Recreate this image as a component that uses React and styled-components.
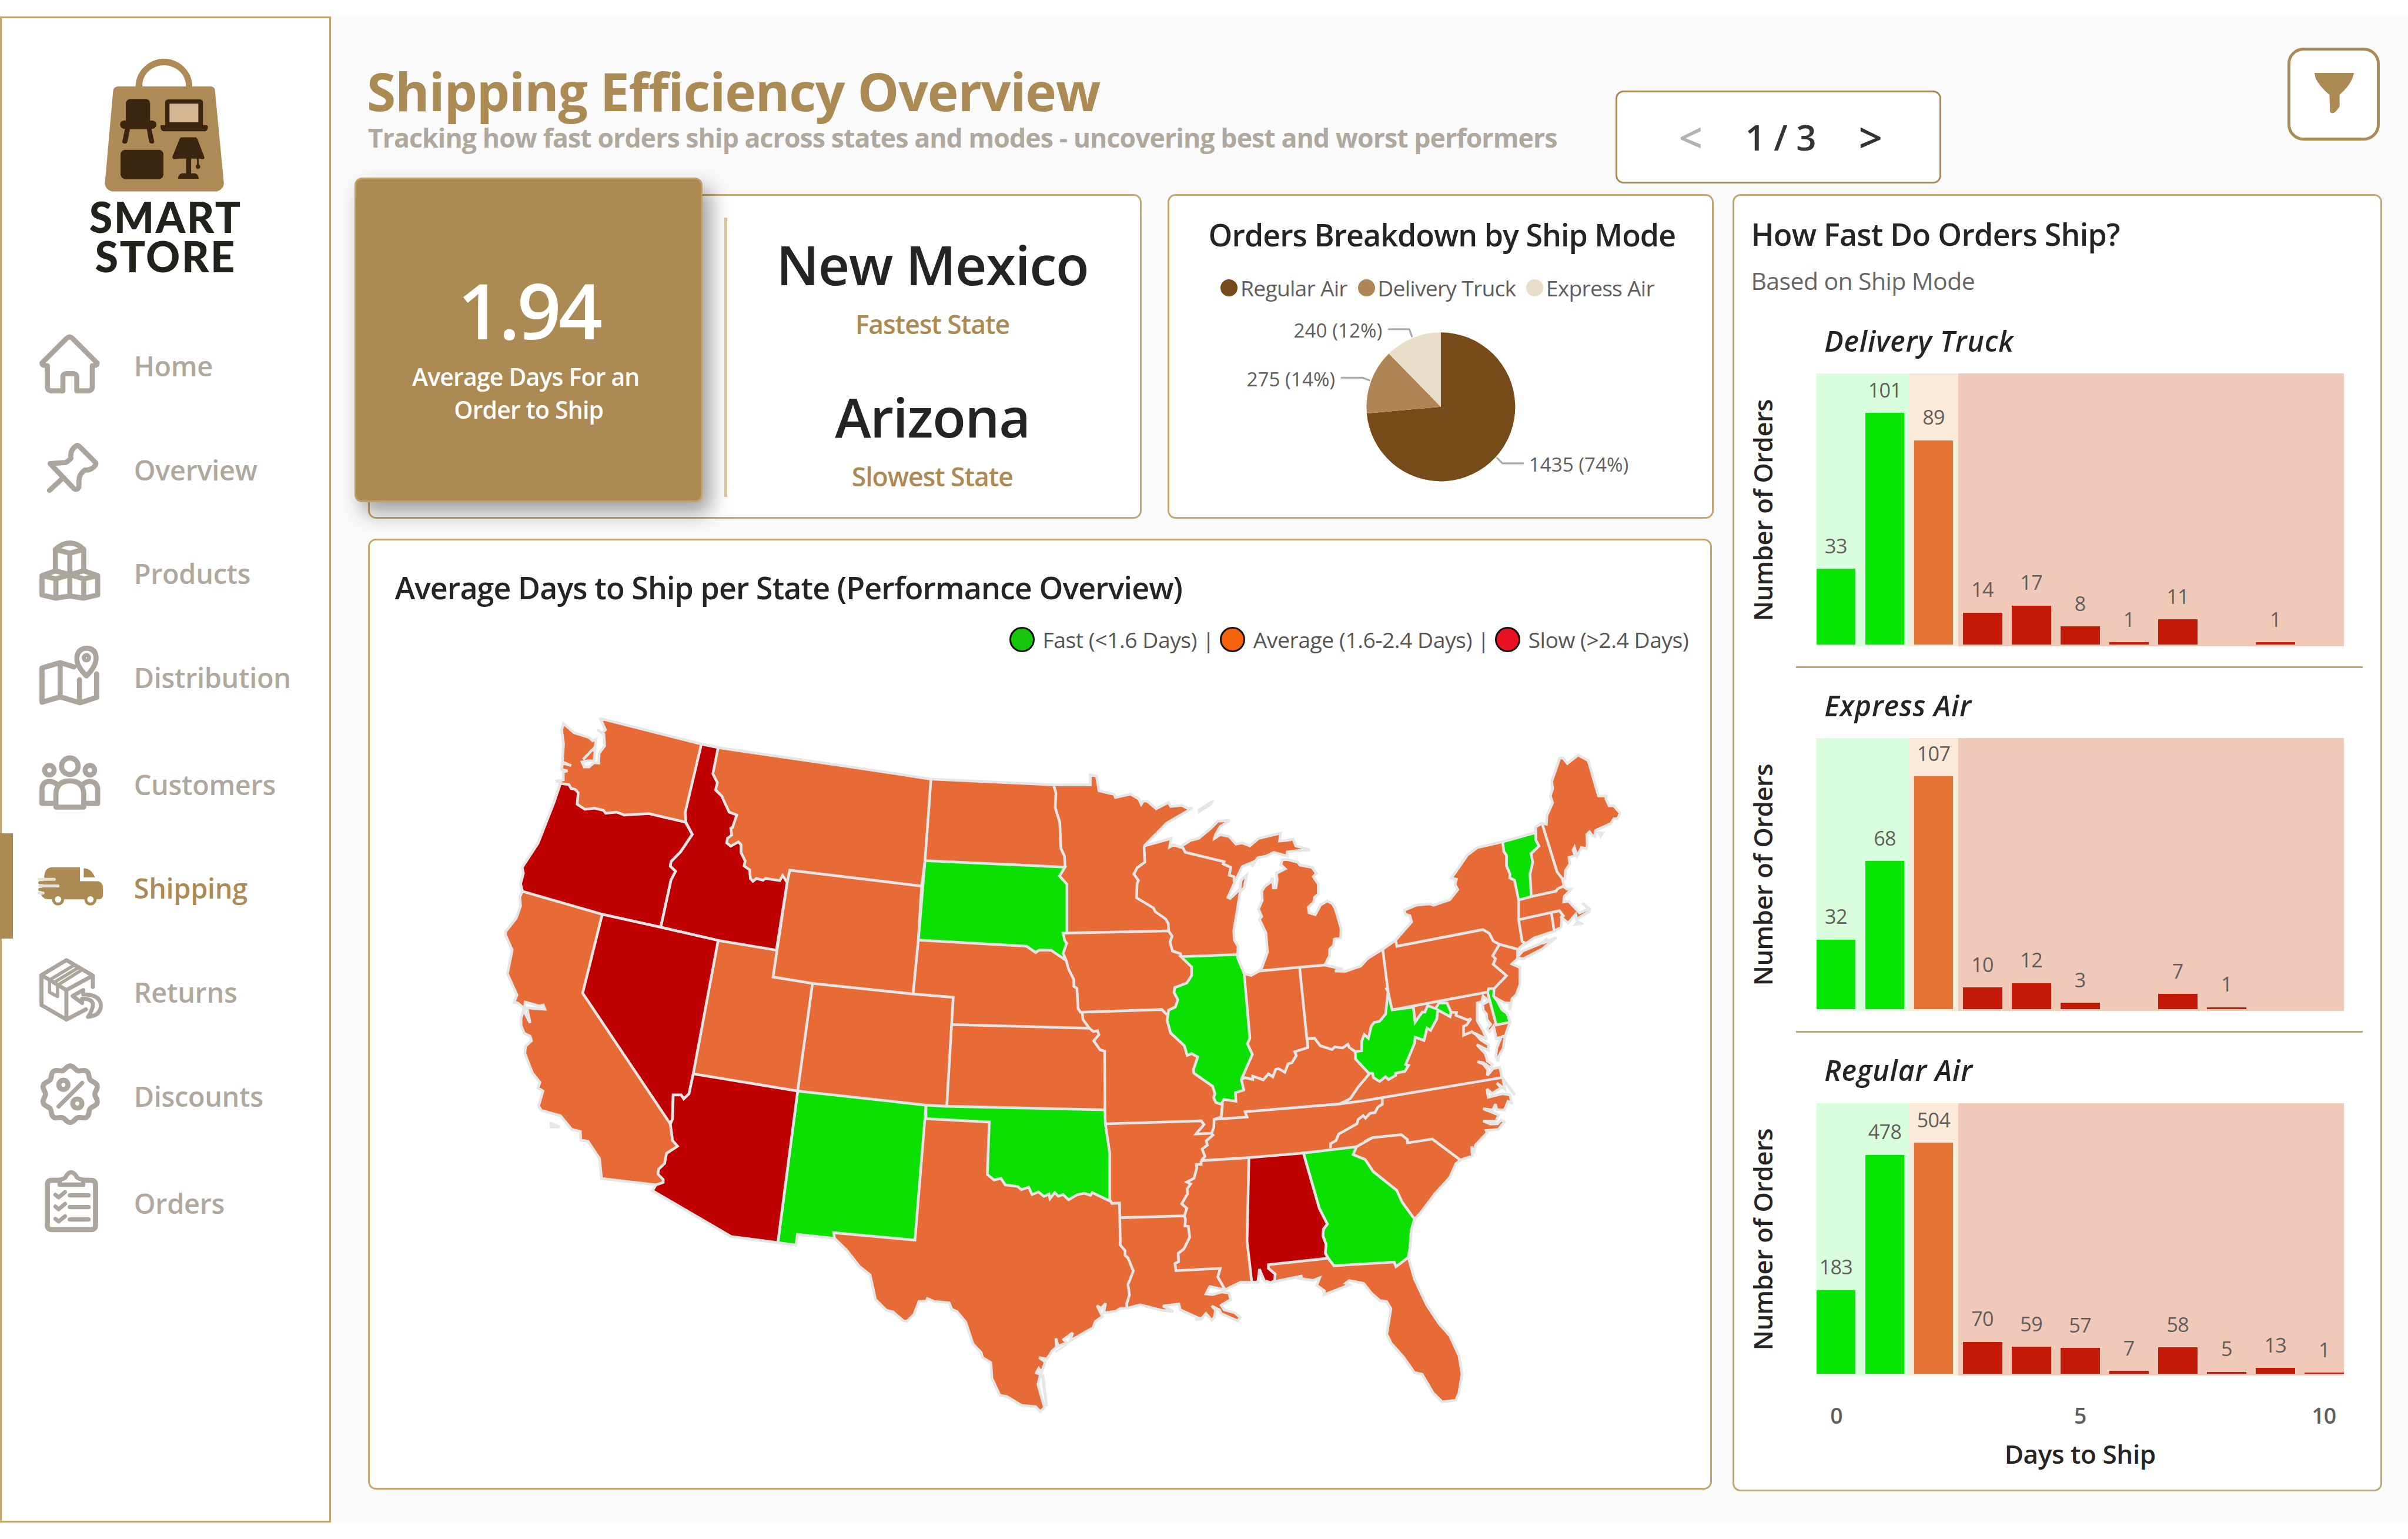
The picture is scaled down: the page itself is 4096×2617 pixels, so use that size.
import React from "react";
import styled, { createGlobalStyle, css } from "styled-components";

/* One rem is a hundred design units, the board is 4500 units wide. */
const u = (n) => `${(n / 100).toFixed(4)}rem`;

const color = {
  gold: "#ab8a54",
  line: "#c2a66e",
  muted: "#b0a89d",
  ink: "#252423",
  grey: "#605e5c",
  canvas: "#fafafa",
};

const GlobalStyle = createGlobalStyle`
  html { font-size: calc(100vw / 45); }
  body { margin: 0; background: #fff; overflow: hidden; }
  *, *::before, *::after { box-sizing: border-box; }
  #root { font-family: "Open Sans", "Noto Sans", sans-serif; color: ${color.ink}; }
`;

const type = (size, line, weight = 400, track = 0) => css`
  font-size: ${u(size)};
  line-height: ${u(line)};
  font-weight: ${weight};
  letter-spacing: ${track}em;
  white-space: nowrap;
`;

/* ---------- shell ---------- */

const Page = styled.div`
  width: 45rem;
  height: 28.75rem;
  padding: ${u(31)} 0;
  display: flex;
`;

const Sidebar = styled.aside`
  width: ${u(619)};
  flex: none;
  background: #fff;
  border: ${u(3.6)} solid ${color.line};
  display: flex;
  flex-direction: column;
`;

const Main = styled.main`
  flex: 1;
  background: ${color.canvas};
  padding: 0 ${u(48)} 0 ${u(68.6)};
  display: flex;
  flex-direction: column;
`;

/* ---------- sidebar ---------- */

const Logo = styled.div`
  padding-top: ${u(74.5)};
  display: flex;
  flex-direction: column;
  align-items: center;
`;

const Bag = styled.svg`
  width: ${u(224.5)};
  height: ${u(250)};
  margin-right: ${u(3)};
  display: block;
`;

const Brand = styled.div`
  ${type(79, 73.5, 900, 0.035)}
  font-family: Lato, "Open Sans", sans-serif;
  color: #22211c;
  text-align: center;
  margin-top: ${u(9)};
`;

const Nav = styled.nav`
  margin-top: ${u(72)};
  display: flex;
  flex-direction: column;
  gap: ${u(6)};
`;

const NavGroup = styled.div`
  display: flex;
  flex-direction: column;
`;

const NavItem = styled.a`
  position: relative;
  height: ${u(194)};
  padding-left: ${u(69.4)};
  display: flex;
  align-items: center;
  gap: ${u(57.5)};
  color: ${(p) => (p.$active ? color.gold : color.muted)};
  ${type(51.5, 60, 600, -0.007)}
`;

const ActiveMark = styled.span`
  position: absolute;
  left: ${u(-3.6)};
  top: ${u(-6)};
  width: ${u(24)};
  height: ${u(197)};
  background: ${color.gold};
`;

const NavIcon = styled.svg`
  width: ${u(120)};
  height: ${u(120)};
  margin-bottom: ${u(8)};
  overflow: visible;
  fill: none;
  stroke: ${(p) => (p.$active ? color.gold : "#aca59d")};
  stroke-width: 9.5;
  stroke-linejoin: round;
  stroke-linecap: round;
`;

function scallop() {
  const points = [];
  for (let i = 0; i < 120; i += 1) {
    const a = (i / 120) * Math.PI * 2;
    const r = 49.5 + 3.4 * Math.cos(10 * (a - Math.PI / 2));
    points.push(`${(58.6 + r * Math.cos(a)).toFixed(1)},${(60 + r * Math.sin(a)).toFixed(1)}`);
  }
  return points.join(" ");
}

const icons = {
  home: (
    <g transform="translate(2 5.5)">
      <path d="M14 60V97Q14 105 22 105H43V80Q43 73 50 73H62Q69 73 69 80V105H90Q98 105 98 97V60" />
      <path d="M14 58Q4 58 4 53L50 7Q55.5 2 61 7L107 53Q107 58 98 58" />
    </g>
  ),
  pin: (
    <g>
      <path d="M21 52L50 50Q55 48 60 42Q58 26 70 19Q72 17 76 20L106 50Q108 54 102 59Q94 65 86 64Q75 72 75 84L75 96Q70 104 64 97Z" />
      <path d="M46 78L20 102" />
    </g>
  ),
  boxes: (
    <g>
      <path d="M31 58V19Q44 7 58 7Q72 7 84 19V58M31 19L58 26L84 19M58 26V64" />
      <path d="M6 68L31 59L58 66L84 59L110 68V104L84 110L58 106L31 110L6 104ZM6 68L32 74L58 66L84 74L110 68M32 74V109M58 66V106M84 74V109" />
    </g>
  ),
  map: (
    <g>
      <path d="M66 44L40 36L6 46V110L40 100L77 111L108 101V57M40 36V100M76 68V110" />
      <path d="M89 61Q71 43 71 28Q72 10 89 9Q107 10 107 28Q107 43 89 61Z" />
      <circle cx="89" cy="27" r="5" strokeWidth="7.5" />
    </g>
  ),
  people: (
    <g>
      <circle cx="58" cy="29.6" r="15.5" />
      <circle cx="19.8" cy="37" r="8.8" />
      <circle cx="95.5" cy="37" r="8.8" />
      <path d="M32 106V80Q34 57 58 57Q82 57 84 80V106Z" />
      <path d="M31 99H6V70Q8 58 20 58Q26 58 32 62M84 99H110V70Q107 58 95 58Q90 58 84 62" />
    </g>
  ),
  truck: (
    <g stroke="none" fill={color.gold}>
      <path d="M10 46Q10 26 24 25H77V51H111Q120 53 120 64V76Q120 85 111 85H18Q6 84 4 74Z" />
      <path d="M84 27Q98 27 105 44H84Z" />
      <path d="M0 47.500H29M2 60H36M0 73H8" stroke="#e9e2d8" strokeWidth="5.500" />
      <path d="M2 53.700H32M2 66.500H22" stroke={color.gold} strokeWidth="6" />
      <circle cx="36" cy="85" r="11.500" />
      <circle cx="96.500" cy="85" r="11.500" />
      <circle cx="36" cy="85" r="6" fill="#fff" />
      <circle cx="96.500" cy="85" r="6" fill="#fff" />
    </g>
  ),
  returns: (
    <g strokeWidth="7.5">
      <path d="M101 54V33L51.600 4L5 32V88L51.600 115L88 96M5 32L51.600 60L101 33M51.600 60V115" />
      <path d="M66.700 13L20 41V64L35 72V51L81 22M28 46L74 18" strokeWidth="6" />
      <path d="M83 60L63 71L81 84V76Q103 76 101 90Q99 100 92 110Q116 108 116 88Q114 68 83 68Z" />
    </g>
  ),
  discount: (
    <g>
      <polygon points={scallop()} />
      <circle cx="46" cy="42.500" r="8.500" />
      <circle cx="72" cy="77.500" r="8.500" />
      <path d="M81 39L37 83" strokeWidth="8" />
    </g>
  ),
  orders: (
    <g>
      <path d="M38 21H24Q16 21 16 29V105Q16 113 24 113H98Q106 113 106 105V29Q106 21 98 21H84" />
      <path d="M39 29V20Q50 18 51 13Q60.500 -1 70 13Q71 18 83 20V29Z" strokeWidth="8" />
      <path d="M58 49H93M58 71H93M58 94H93" strokeWidth="8" />
      <path d="M31 48L37 53L49 43M31 70L37 75L49 65M31 93L37 98L49 88" strokeWidth="7.5" />
    </g>
  ),
};

const navGroups = [
  [
    { label: "Home", icon: "home" },
    { label: "Overview", icon: "pin" },
    { label: "Products", icon: "boxes" },
    { label: "Distribution", icon: "map" },
  ],
  [
    { label: "Customers", icon: "people" },
    { label: "Shipping", icon: "truck", active: true },
    { label: "Returns", icon: "returns" },
    { label: "Discounts", icon: "discount" },
  ],
  [{ label: "Orders", icon: "orders" }],
];

function BagMark() {
  return (
    <Bag viewBox="480 300 550 700" preserveAspectRatio="none">
      <g fill="#ae8a56">
        <path d="M622 448V436C628 358 690 302 752 302S876 358 881 436V448H852V436C848 378 802 337 752 337S656 378 653 436V448Z" />
        <path d="M541 448H966Q984 451 985 468L1026 955Q1024 985 995 997H514Q484 986 481 958L519 468Q522 450 541 448Z" />
      </g>
      <g fill="#3a2511">
        <path d="M596 513H670Q687 517 688 536V626H700Q717 630 717 647Q717 664 702 669H694L707 736Q706 747 696 747Q687 747 684 738L673 671H596L584 738Q580 747 571 747Q561 746 561 736L573 669H566Q551 664 551 647Q551 630 566 626H577V536Q578 518 596 513Z" />
        <path d="M770 515H918Q929 518 930 528V651H948Q953 654 953 660Q951 680 940 682H750Q736 680 735 655L739 651H757V528Q758 518 770 515Z" />
        <path d="M830 714H898L904 721L937 818Q937 828 928 828L915 825H911V854Q920 862 917 872Q912 880 907 880Q898 878 897 866Q898 858 903 854V825H876V902H893Q909 906 911 931H816Q816 908 834 902H853V825H821L797 828Q789 824 790 816L824 720Z" />
        <path d="M572 779H731Q748 784 749 802V910Q747 928 731 932H572Q556 928 553 910V802Q554 784 572 779Z" />
      </g>
      <path fill="#d4b693" d="M777 538H909V635H777Z" />
    </Bag>
  );
}

/* ---------- header ---------- */

const Header = styled.header`
  height: ${u(331.5)};
  flex: none;
  padding-right: ${u(5)};
  display: flex;
  align-items: flex-start;
`;

const Titles = styled.div`
  flex: 1;
  padding-top: ${u(80)};
`;

const PageTitle = styled.h1`
  ${type(98, 118, 700, -0.013)}
  margin: 0 0 0 ${u(-2)};
  color: ${color.gold};
`;

const PageSubtitle = styled.p`
  ${type(49, 58, 700, -0.0208)}
  margin: 0;
  color: ${color.muted};
`;

const Pager = styled.div`
  width: ${u(609)};
  height: ${u(174)};
  margin: ${u(138)} ${u(647)} 0 0;
  padding-left: ${u(8)};
  border: ${u(4)} solid ${color.gold};
  border-radius: ${u(15)};
  background: #fff;
  display: grid;
  grid-template-columns: repeat(3, ${u(168)});
  justify-content: center;
  align-items: center;
  justify-items: center;
`;

const PageCount = styled.span`
  ${type(66, 80, 600, -0.01)}
  color: #333;
`;

const PageArrow = styled.span`
  ${type(78, 80, 600)}
  color: ${(p) => (p.$disabled ? "#b3b3b3" : "#333")};
`;

const FilterButton = styled.button`
  width: ${u(172)};
  height: ${u(174)};
  margin: ${u(58)} 0 0;
  padding: 0 0 ${u(1)} ${u(2)};
  border: ${u(6.2)} solid ${color.gold};
  border-radius: ${u(30)};
  background: #fff;
  display: flex;
  align-items: center;
  justify-content: center;
`;

const Funnel = styled.svg`
  width: ${u(76)};
  height: ${u(80)};
  fill: ${color.gold};
`;

/* ---------- cards ---------- */

const Body = styled.div`
  display: flex;
  gap: ${u(35)};
`;

const LeftColumn = styled.div`
  width: ${u(2515.4)};
  flex: none;
  display: flex;
  flex-direction: column;
  gap: ${u(38)};
`;

const TopRow = styled.div`
  display: flex;
  gap: ${u(47.7)};
`;

const Card = styled.section`
  background: #fff;
  border: ${u(3.6)} solid ${color.line};
  border-radius: ${u(15)};
`;

const StatesCard = styled(Card)`
  width: ${u(1446.4)};
  height: ${u(606)};
  display: flex;
`;

const AverageTile = styled.div`
  width: ${u(650)};
  height: ${u(606)};
  flex: none;
  margin: ${u(-34)} 0 0 ${u(-28)};
  padding-top: ${u(168)};
  background: ${color.gold};
  border: ${u(4)} solid #c2a067;
  border-radius: ${u(14)};
  box-shadow: ${u(15)} ${u(19)} ${u(38)} rgba(0, 0, 0, 0.38);
  color: #fff;
  text-align: center;
`;

const AverageValue = styled.div`
  ${type(144, 150, 600, -0.036)}
`;

const AverageCaption = styled.div`
  ${type(45, 61.5, 600, -0.02)}
  margin-top: ${u(19)};
`;

const Rule = styled.div`
  width: ${u(5.5)};
  height: ${u(522)};
  flex: none;
  margin: ${u(41)} 0 0 ${u(40.5)};
  background: #d5c4a0;
`;

const StateList = styled.div`
  flex: 1;
  padding: ${u(68)} ${u(5)} 0 0;
  display: flex;
  flex-direction: column;
  gap: ${u(83)};
  text-align: center;
`;

const StateName = styled.div`
  ${type(102, 120, 600, -0.015)}
`;

const StateRole = styled.div`
  ${type(49, 60, 600, -0.025)}
  margin-top: ${u(22)};
  color: ${color.gold};
`;

const CardTitle = styled.h2`
  ${type(57, 70, 600, -0.017)}
  margin: 0;
`;

/* ---------- pie ---------- */

const PieCard = styled(Card)`
  width: ${u(1021.3)};
  height: ${u(606)};
  padding-top: ${u(38.5)};
  display: flex;
  flex-direction: column;
  align-items: center;
`;

const PieTitle = styled(CardTitle)`
  letter-spacing: -0.0185em;
  padding-left: ${u(5)};
`;

const PieLegend = styled.div`
  margin: ${u(39)} 0 0 ${u(-12)};
  display: flex;
  gap: ${u(19.5)};
`;

const PieKey = styled.span`
  ${type(41, 50, 400, -0.021)}
  color: ${color.grey};
  display: flex;
  align-items: center;
  gap: ${u(5)};
`;

const PieDot = styled.i`
  width: ${u(32)};
  height: ${u(32)};
  border-radius: 50%;
  background: ${(p) => p.$fill};
`;

const PieChart = styled.svg`
  width: ${u(1014)};
  height: ${u(401.5)};
  display: block;
  font-size: 36.5px;
  text { fill: ${color.grey}; }
  polyline { fill: none; stroke: #a9a9a9; stroke-width: 3.4; stroke-linecap: round; stroke-linejoin: round; }
`;

const modes = [
  { name: "Regular Air", value: 1435, fill: "#764a19", text: "1435 (74%)", x: 2857, y: 879, anchor: "start", lead: "2797.7,854 2807.5,864 2846,864" },
  { name: "Delivery Truck", value: 275, fill: "#b08555", text: "275 (14%)", x: 2495, y: 720, anchor: "end", lead: "2507,704 2546,704 2559,709" },
  { name: "Express Air", value: 240, fill: "#e9ddc8", text: "240 (12%)", x: 2583, y: 628.7, anchor: "end", lead: "2595,613.4 2633.5,613.4 2638.4,627" },
];

function ShipModePie() {
  const total = modes.reduce((s, m) => s + m.value, 0);
  const cx = 2692.4;
  const cy = 758.5;
  const r = 139;
  let angle = -Math.PI / 2;
  return (
    <PieChart viewBox="2185 562 1014 401.5">
      {modes.map((m) => {
        const next = angle + (m.value / total) * Math.PI * 2;
        const large = next - angle > Math.PI ? 1 : 0;
        const d = `M${cx} ${cy}L${cx + r * Math.cos(angle)} ${cy + r * Math.sin(angle)}A${r} ${r} 0 ${large} 1 ${cx + r * Math.cos(next)} ${cy + r * Math.sin(next)}Z`;
        angle = next;
        return <path key={m.name} d={d} fill={m.fill} />;
      })}
      {modes.map((m) => (
        <g key={m.name}>
          <polyline points={m.lead} />
          <text x={m.x} y={m.y} textAnchor={m.anchor}>{m.text}</text>
        </g>
      ))}
    </PieChart>
  );
}

/* ---------- map ---------- */

const MapCard = styled(Card)`
  width: ${u(2511.4)};
  height: ${u(1776)};
  padding-top: ${u(54)};
`;

const MapTitle = styled(CardTitle)`
  padding-left: ${u(47)};
`;

const MapLegend = styled.div`
  margin-top: ${u(36)};
  padding-right: ${u(40)};
  display: flex;
  justify-content: flex-end;
  gap: ${u(11)};
`;

const MapKey = styled.span`
  ${type(41, 50, 400, -0.013)}
  color: #555;
  display: flex;
  align-items: center;
  gap: ${u(15)};
`;

const MapDot = styled.i`
  width: ${u(47)};
  height: ${u(47)};
  border-radius: 50%;
  border: ${u(3.5)} solid #111;
  background: ${(p) => p.$fill};
`;

const MapCanvas = styled.svg`
  width: ${u(2504)};
  height: ${u(1552)};
  display: block;
  fill: #e66b37;
  stroke: #e6e6e6;
  stroke-width: 5;
  stroke-miterlimit: 3;
`;

/* The outlines are kept on separate sheets, each with its own origin and step. */
const sheets = {
  west: [900, 1280, 0.44643, 0.66964],
  plains: [1500, 1400, 0.44643, 0.42092],
  mid: [2050, 1400, 0.35714, 0.70153],
  east: [2550, 1380, 0.33163, 0.5102],
  south: [1500, 2000, 0.44643, 0.42092],
  base: [0, 0, 2.8699, 2.8699],
};

function trace(source) {
  return source
    .split("|")
    .flatMap((part) => {
      const [name, ...pairs] = part.trim().split(/\s+/);
      const [ox, oy, sx, sy] = sheets[name];
      return pairs.map((pair) => {
        const [x, y] = pair.split(",").map(Number);
        return `${(ox + x * sx).toFixed(1)},${(oy + y * sy).toFixed(1)}`;
      });
    })
    .join(" ");
}

const country = `west 505,92 920,162 990,172 1568,228
 | plains 535,128 1050,154 1204,154 1204,110 1230,115 1240,180 1304,196 1309,210 1372,195 1407,216 1417,240 1425,226 1442,226 1480,260 1531,232 1541,250
 | mid 443,147 475,155 500,154 365,194 246,255 388,235 380,258 400,252 435,258 490,240 532,235 598,207 632,189 695,187 645,203 620,225 615,235 645,225 692,230 727,250 760,247 800,255 845,235 960,221 955,242 995,240 1027,237 1040,255 1115,266 1040,268 995,271 995,282 925,272 885,282 840,287 810,310 815,298 760,310 722,350 685,392 697,395 748,370 755,345 783,333 770,367 750,375 716,480 718,505 738,522 735,552 770,595 806,600 848,588 862,580 892,538 884,487 850,450 862,443 845,423 865,400 862,375 880,362 906,352 918,340 922,367 936,367 943,345 938,328 985,316 962,305 970,292 995,291 1050,298 1062,306 1125,312 1148,328 1132,337 1158,357 1158,383 1138,392 1134,405 1106,418 1110,433 1142,438 1170,412 1205,402 1230,408 1245,420 1277,475 1275,500 1242,503 1238,520 1218,530 1217,547 1192,572 1285,583 1245,588 1300,589 1380,575 1415,555 1495,530
 | east 175,735 265,668 255,645 230,640 225,625 290,607 367,602 388,607 480,587 525,550 510,530 518,512 490,507 580,423 635,396 775,375 965,341 965,320 1000,307 1025,310 1028,278 1060,232 1047,207 1060,180 1055,153 1100,68 1118,68 1143,88 1203,57 1260,77 1318,207 1360,207 1360,217 1378,243 1405,243 1440,270 1425,290 1405,290 1388,308 1302,333 1298,355 1282,350 1268,338 1252,348 1255,385 1250,400 1222,395 1198,427 1183,395 1175,405 1185,425 1152,432 1157,455 1132,480 1130,510 1115,510 1125,540 1140,548 1165,548 1125,575 1122,595 1150,593 1212,635 1265,620 1228,600 1268,620 1266,630 1195,658 1190,640 1147,672 1103,648 1112,650 1108,687 1065,703 955,727 875,762 868,792 890,775 1000,745 1030,728 1020,742 1080,725 1000,768 895,803 868,800 830,822 875,835 875,898 855,935 830,950 820,990 815,965 785,963 730,943 745,955 775,990 803,1003 820,1035 790,1090 782,1130 755,1162 752,1178 740,1160 745,1130 765,1098 742,1095 727,1050 705,1070 690,1060 710,1043 690,1025 687,1005 670,992 665,970 700,958 668,940 660,960 635,965 635,1030 665,1063 690,1098 650,1085 620,1075 655,1100 698,1118 698,1138 632,1117 680,1150 693,1178 720,1190 710,1202 668,1183 636,1180 668,1188 695,1210 692,1230 725,1205 762,1200 775,1237 848,1302 780,1245 790,1280 745,1258 770,1275 718,1297 690,1280 697,1310 778,1297 820,1302 828,1330 808,1325 788,1357 745,1355 738,1335 722,1357 668,1352 755,1375 740,1398 668,1397 710,1408 750,1407 770,1393 788,1400 755,1427 685,1432 690,1440 625,1485 615,1515 603,1490 607,1525 540,1540
 | base 948,757 944,766 934,777 925,789 921,793 919,800 918,812 917,818 921,832 929,849 937,861 944,869 950,882 952,894 950,906 948,911 939,912 933,906 926,894 921,893 914,883 906,874 903,868
 | mid 1538,1487 1515,1468 1480,1466 1435,1445 1395,1420 1320,1412 1300,1420 1320,1424 1188,1450 1190,1440 1150,1425 1165,1405 1130,1412 1040,1405 1075,1400 930,1415 910,1418 875,1412 850,1382 842,1416 810,1417 750,1417 670,1437 590,1428 570,1448 605,1450 650,1443 690,1445 700,1463 650,1478 665,1490 720,1498 748,1510 738,1520 705,1513 650,1500 640,1490 600,1480 620,1490 615,1510 600,1518 570,1500 545,1515 515,1517 530,1512 435,1490 428,1475 345,1480 400,1495 345,1492 225,1477 160,1486
 | south 1330,1052 1310,1065 1260,1072 1268,1030 1250,1052 1232,1040 1255,1088 1225,1110 1215,1138 1120,1195 1130,1160 1092,1190 1105,1205 1070,1220 1060,1185 1062,1225 1045,1240 1022,1277 990,1270 1015,1290 1000,1335 988,1318 978,1338 995,1345 985,1390 1012,1492 995,1510 975,1488 917,1483 855,1444 825,1437 792,1362 788,1293 753,1270 747,1248 713,1210 682,1112 645,1065 625,1057 613,1027 550,1021 522,1008 517,1020 487,1021 465,1080 435,1110 422,1107 378,1068 350,1060 305,1013 282,903 237,865 185,795 133,741
 | west 1322,1530 1315,1560 1240,1553 1045,1536 715,1408 730,1392 502,1374 494,1319 445,1270 415,1267 413,1243 377,1237 330,1199 250,1184 238,1172 257,1130 236,1122 244,1106 213,1080 181,1025 184,1005 209,990 203,977 178,969 165,947 165,927 175,905 203,940 190,898 265,902 258,890 242,893 182,882 180,900 150,884 136,883 148,862 108,803 128,737 100,695 101,685 145,648 163,614 160,588 171,573 163,552 175,523 170,506 236,439 303,325 330,268 310,266 342,262 342,240 360,237 335,233 338,215 375,222 338,212 343,162 335,122 343,105 388,131 450,144 465,153 480,148 475,170 425,205 460,180 475,178 470,210 450,208 420,212 430,226 450,226 470,214 490,215 492,188 515,167 512,135 485,122 505,132 518,122 498,92`;

const slow = [
  "west 330,272 365,275 375,286 392,289 404,298 400,330 432,344 473,341 510,347 519,355 565,352 597,360 700,356 853,380 882,414 833,463 793,490 790,503 812,517 793,541 750,673 505,637 171,573 163,552 175,523 170,506 236,439 303,325",
  "west 920,162 990,172 968,245 987,270 979,290 1005,307 1036,352 1068,360 1050,395 1043,397 1047,416 1029,425 1026,438 1043,447 1075,435 1086,443 1086,465 1103,488 1099,502 1122,513 1125,537 1136,545 1150,537 1178,542 1188,537 1248,543 1260,529 1279,548 1234,737 990,710 750,673 793,541 812,517 790,503 793,490 833,463 882,414 855,380 852,353",
  "west 505,637 750,673 990,710 886,1082 868,1138 846,1152 835,1141 802,1141 799,1208 790,1222 423,857",
  "west 886,1082 1323,1130 1240,1553 1045,1536 715,1408 730,1392 760,1385 760,1377 738,1362 741,1348 766,1332 774,1304 820,1284 799,1268 790,1222 799,1208 802,1141 835,1141 846,1152 868,1138",
  "mid 795,1085 1080,1073 1163,1220 1205,1262 1185,1275 1182,1293 1198,1315 1195,1340 1210,1353 897,1370 897,1380 932,1395 930,1412 910,1418 875,1412 850,1382 842,1416 810,1417 785,1308",
];

const fast = [
  "west 1323,1130 | south 516,150 470,749 130,716 133,741 | west 1322,1530 1315,1560 1240,1553",
  "south 516,150 600,155 1265,171 1267,233 1285,362 1285,575 1212,538 1205,550 1178,541 1148,548 1113,570 1090,547 1070,554 1055,538 1035,565 1031,545 1010,555 987,535 960,547 946,514 915,525 900,511 848,504 830,475 801,482 773,458 781,225 516,210",
  "plains 512,490 1098,519 1075,558 1106,595 1106,812 1090,812 1097,845 1105,857 1090,902 1103,933 1040,888 990,887 975,898 937,870 484,843",
  "mid 440,550 735,544 735,552 770,595 800,767 787,782 813,810 755,877 768,905 724,912 727,935 663,930 650,943 622,938 610,925 617,915 605,895 507,860 505,850 527,817 495,808 472,813 457,787 385,753 367,720 375,692 410,684 423,665 403,645 407,632 470,620 495,600 495,577",
  "mid 1080,1073 1358,1056 1340,1077 1403,1090 1445,1122 1568,1172 | base 913,782 921,793 919,800 918,812 917,818 909,824 | mid 1555,1363 1240,1373 1210,1353 1195,1340 1198,1315 1182,1293 1185,1275 1205,1262 1163,1220",
  "east 133,925 155,990 275,980 285,1035 325,998 340,998 355,975 400,985 420,965 465,965 487,998 482,1015 412,990 408,1022 372,1065 352,1057 335,1102 285,1090 282,1112 232,1190 248,1193 228,1215 175,1222 175,1230 135,1245 118,1235 85,1252 50,1238 45,1222 20,1222 | mid 1425,862 1352,822 1352,803 1385,800 1385,775 1398,757 1420,767 1435,735 1450,725 1478,722 1510,703 1520,655",
  "east 693,925 700,912 730,912 727,940 745,955 775,990 803,1003 820,1035 742,1045",
  "east 778,375 965,341 965,368 983,390 938,418 948,450 932,493 940,575 868,588 845,515 818,507 820,493 800,463 800,425 785,410",
];

const borders = [
  "west 1279,548 1290,514 | plains 498,603",
  "plains 537,128 512,490 498,603 484,843 462,1082",
  "west 1279,548 1220,812 1385,830 | plains 462,1082 630,1097 | south 603,155",
  "west 1385,830 1323,1130",
  "plains 624,1218 1200,1234",
  "plains 1103,933 1113,972 1135,1018 1135,1048 1148,1057 1153,1147 1163,1163 1170,1163 1173,1195 1200,1234 1217,1249 1234,1245 1240,1263 1218,1290 1245,1330 1264,1336 | south 1265,171",
  "plains 1163,1163 1503,1151 | mid 367,705",
  "plains 1090,812 1531,802",
  "plains 1050,154 1060,190 1057,255 1076,320 1081,437 1096,470 1098,519",
  "mid 246,255 250,298 210,313 193,330 217,347 210,355 207,393 295,420 305,430 360,450 373,462 375,482 393,495 382,510 395,535 437,542 440,550",
  "mid 435,258 450,260 462,272 665,297 660,303 700,312 692,333 717,337 717,352",
  "mid 848,588 1060,578 1192,572",
  "mid 1060,578 1103,792",
  "mid 755,877 775,872 815,877 815,868 870,878 897,862 920,870 935,850 950,848 983,858 1000,835 1020,832 1043,813 1035,803 1103,792 1100,768 1138,767 1168,787 1230,797 1245,790 1285,793 1313,783 1320,792 1352,803",
  "mid 1495,530 | east 133,925",
  "east 133,925 120,908",
  "east 175,735 182,757 667,696 703,710 725,738 760,750 862,768 862,800",
  "east 760,750 722,792 738,803 725,823 800,865 730,912",
  "east 155,990 693,925",
  "east 482,1015 487,998 518,1000 515,1010 580,1027 600,1022 576,1045 558,1050 558,1083 605,1070 625,1080",
  "east 742,1095 790,1085",
  "east 868,588 868,660 888,740 905,745 875,762",
  "east 868,660 1098,627 1125,650",
  "east 1053,635 1068,700",
  "east 940,575 1080,555 1087,547 1120,537",
  "east 1000,307 1085,485 1115,510",
  "mid 1425,862 1365,898 1325,928 1270,942",
  "mid 613,983 785,977 775,963 1270,942 | east 0,1322 775,1238",
  "mid 657,940 650,977 613,983 611,1005 600,1020 607,1025 572,1040 577,1052 550,1062 565,1082 545,1093",
  "mid 48,995 545,987 560,997 518,1022 600,1020",
  "mid 545,1093 795,1085",
  "mid 1222,1060 1222,1048 1250,1040 1265,1022 1360,995 1367,983 1393,973 1405,980 1428,967 1455,965 1470,950 1493,943 1493,928",
  "mid 1358,1056 1440,1032 | east 0,1472 45,1458 207,1447 242,1465 242,1477 382,1463 540,1540",
  "mid 545,1093 545,1103 520,1103 522,1113 508,1140 470,1150 490,1155 472,1168 473,1182 443,1208 470,1220 457,1240 463,1250 460,1267 478,1268 485,1297 455,1328 425,1340 427,1362 408,1367 413,1386 645,1380 632,1403 670,1437",
  "mid 122,1245 457,1240",
  "mid 67,1197 78,1207 118,1206 122,1318 147,1333 147,1345 163,1353 190,1387 162,1423 170,1450 155,1475 158,1487",
];

const islets = [
  "west 288,1218 325,1228 322,1232 288,1232",
  "mid 532,158 610,133 597,145 532,166",
  "east 1182,680 1200,666 1235,675",
  "east 1314,340 1348,340 1330,358",
  "east 1228,600 1240,602 1268,620 1262,624",
  "south 1001,1350 1008,1348 1023,1483 1018,1483",
  "south 1058,1245 1105,1213 1100,1218",
];

function StateMap() {
  return (
    <MapCanvas viewBox="691 1218 2504 1552">
      <polygon points={trace(country)} />
      <g fill="none">
        {borders.map((b) => <polyline key={b} points={trace(b)} />)}
      </g>
      <g fill="#0ce000">
        {fast.map((s) => <polygon key={s} points={trace(s)} />)}
      </g>
      <g fill="#bf0000">
        {slow.map((s) => <polygon key={s} points={trace(s)} />)}
      </g>
      <g fill="#e6e6e6" strokeWidth="3">
        {islets.map((s) => <polygon key={s} points={trace(s)} />)}
      </g>
    </MapCanvas>
  );
}

/* ---------- bar charts ---------- */

const SpeedCard = styled(Card)`
  width: ${u(1214)};
  height: ${u(2424)};
  padding-top: ${u(37.5)};
  display: flex;
  flex-direction: column;
`;

const SpeedTitle = styled(CardTitle)`
  padding-left: ${u(31)};
  letter-spacing: -0.014em;
`;

const SpeedSubtitle = styled.p`
  ${type(45, 60, 400, -0.014)}
  margin: ${u(21.4)} 0 ${u(11.6)};
  padding-left: ${u(31)};
  color: #666;
`;

const Facet = styled.div`
  display: flex;
  height: ${u(681.3)};
  flex: none;
`;

const AxisLabel = styled.div`
  ${type(48, 60, 600, -0.012)}
  width: ${u(60)};
  height: ${u(509)};
  flex: none;
  margin: ${u(132)} ${u(32)} 0 ${u(23)};
  writing-mode: vertical-rl;
  transform: rotate(180deg);
  text-align: center;
`;

const FacetBody = styled.div`
  width: ${u(1059)};
  padding: ${u(40)} ${u(35)} 0 ${u(38)};
  border-bottom: ${(p) => (p.$last ? "none" : `${u(3.4)} solid ${color.line}`)};
`;

const FacetTitle = styled.h3`
  ${type(53, 60, 600, 0.018)}
  font-style: italic;
  margin: 0 0 ${u(31.8)};
  padding-left: ${u(15)};
`;

const Plot = styled.div`
  width: ${u(986)};
  height: ${u(508.9)};
  padding-bottom: ${u(2.6)};
  background: linear-gradient(90deg, #d9fedd 17.58%, #fcead9 17.58% 26.87%, #f0c9b8 26.87%);
  display: flex;
  justify-content: space-between;
  align-items: flex-end;
`;

const BarSlot = styled.div`
  width: ${u(73.5)};
  display: flex;
  flex-direction: column;
  align-items: center;
`;

const BarValue = styled.span`
  ${type(37.5, 50, 400, -0.02)}
  color: ${color.grey};
  margin-bottom: ${u(17.5)};
`;

const barFill = (day) => (day < 2 ? "#09e505" : day === 2 ? "#e57336" : "#c31a09");

const Bar = styled.div`
  width: 100%;
  height: ${(p) => u(p.$size)};
  background: ${(p) => barFill(p.$day)};
`;

const Axis = styled.div`
  margin: ${u(-40)} 0 0 ${u(153)};
  width: ${u(986)};
`;

const Ticks = styled.div`
  padding-top: ${u(49)};
  display: flex;
  justify-content: space-between;
`;

const Tick = styled.span`
  ${type(41, 50, 600, -0.02)}
  width: ${u(75)};
  text-align: center;
  color: ${color.grey};
`;

const DaysLabel = styled.div`
  ${type(48.5, 60, 600, -0.01)}
  margin-top: ${u(17)};
  text-align: center;
`;

const facets = [
  { name: "Delivery Truck", unit: 4.287, values: [33, 101, 89, 14, 17, 8, 1, 11, null, 1, null] },
  { name: "Express Air", unit: 4.07, values: [32, 68, 107, 10, 12, 3, null, 7, 1, null, null] },
  { name: "Regular Air", unit: 0.857, values: [183, 478, 504, 70, 59, 57, 7, 58, 5, 13, 1] },
];

function BarFacet({ name, unit, values, last }) {
  return (
    <Facet>
      <AxisLabel>Number of Orders</AxisLabel>
      <FacetBody $last={last}>
        <FacetTitle>{name}</FacetTitle>
        <Plot>
          {values.map((v, day) => (
            <BarSlot key={day}>
              {v !== null && <BarValue>{v}</BarValue>}
              {v !== null && <Bar $day={day} $size={Math.max(v * unit, 2.6)} />}
            </BarSlot>
          ))}
        </Plot>
      </FacetBody>
    </Facet>
  );
}

/* ---------- app ---------- */

export default function App() {
  return (
    <>
      <GlobalStyle />
      <Page>
        <Sidebar>
          <Logo>
            <BagMark />
            <Brand>SMART<br />STORE</Brand>
          </Logo>
          <Nav>
            {navGroups.map((group) => (
              <NavGroup key={group[0].label}>
                {group.map((item) => (
                  <NavItem key={item.label} $active={item.active}>
                    {item.active && <ActiveMark />}
                    <NavIcon viewBox="0 0 120 120" $active={item.active}>{icons[item.icon]}</NavIcon>
                    {item.label}
                  </NavItem>
                ))}
              </NavGroup>
            ))}
          </Nav>
        </Sidebar>
        <Main>
          <Header>
            <Titles>
              <PageTitle>Shipping Efficiency Overview</PageTitle>
              <PageSubtitle>Tracking how fast orders ship across states and modes - uncovering best and worst performers</PageSubtitle>
            </Titles>
            <Pager>
              <PageArrow $disabled>&lt;</PageArrow>
              <PageCount>1 / 3</PageCount>
              <PageArrow>&gt;</PageArrow>
            </Pager>
            <FilterButton aria-label="Filter">
              <Funnel viewBox="0 0 76 80">
                <path d="M1 1H75L72 11Q66 26 48 42V64L41 73Q34 79 30 74L29 42Q10 26 3 11Z" />
              </Funnel>
            </FilterButton>
          </Header>
          <Body>
            <LeftColumn>
              <TopRow>
                <StatesCard>
                  <AverageTile>
                    <AverageValue>1.94</AverageValue>
                    <AverageCaption>Average Days For an&nbsp;<br />Order to Ship</AverageCaption>
                  </AverageTile>
                  <Rule />
                  <StateList>
                    <div>
                      <StateName>New Mexico</StateName>
                      <StateRole>Fastest State</StateRole>
                    </div>
                    <div>
                      <StateName>Arizona</StateName>
                      <StateRole>Slowest State</StateRole>
                    </div>
                  </StateList>
                </StatesCard>
                <PieCard>
                  <PieTitle>Orders Breakdown by Ship Mode</PieTitle>
                  <PieLegend>
                    {modes.map((m) => (
                      <PieKey key={m.name}><PieDot $fill={m.fill} />{m.name}</PieKey>
                    ))}
                  </PieLegend>
                  <ShipModePie />
                </PieCard>
              </TopRow>
              <MapCard>
                <MapTitle>Average Days to Ship per State (Performance Overview)</MapTitle>
                <MapLegend>
                  <MapKey><MapDot $fill="#16c60c" />Fast (&lt;1.6 Days) |</MapKey>
                  <MapKey><MapDot $fill="#f7630c" />Average (1.6-2.4 Days) |</MapKey>
                  <MapKey><MapDot $fill="#e81224" />Slow (&gt;2.4 Days)</MapKey>
                </MapLegend>
                <StateMap />
              </MapCard>
            </LeftColumn>
            <SpeedCard>
              <SpeedTitle>How Fast Do Orders Ship?</SpeedTitle>
              <SpeedSubtitle>Based on Ship Mode</SpeedSubtitle>
              {facets.map((f, i) => <BarFacet key={f.name} {...f} last={i === 2} />)}
              <Axis>
                <Ticks>
                  {facets[0].values.map((_, day) => (
                    <Tick key={day}>{day % 5 === 0 ? day : ""}</Tick>
                  ))}
                </Ticks>
                <DaysLabel>Days to Ship</DaysLabel>
              </Axis>
            </SpeedCard>
          </Body>
        </Main>
      </Page>
    </>
  );
}
